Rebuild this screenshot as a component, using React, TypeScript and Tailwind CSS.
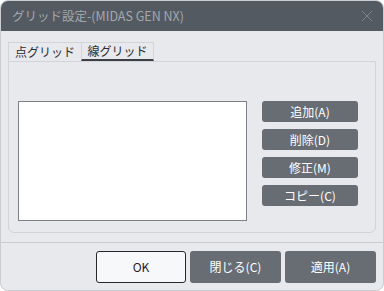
import React from "react";

const sideButtons = ["追加(A)", "削除(D)", "修正(M)", "コピー(C)"];

const App: React.FC = () => {
  return (
    <div
      className="w-[384px] h-[291px] bg-white"
      style={{ fontFamily: '"Noto Sans CJK JP", "Noto Sans", sans-serif' }}
    >
      <div className="w-full h-full rounded-[8px] overflow-hidden bg-[#e8e9ed] border border-[#c9ccd1] flex flex-col">
        {/* Title bar */}
        <div className="h-[30px] shrink-0 bg-[#545a62] flex items-center justify-between pl-[11px] pr-[10px]">
          <span className="text-[12.5px] text-[#a3a7ad]">グリッド設定-(MIDAS GEN NX)</span>
          <svg width="12" height="12" viewBox="0 0 12 12" className="text-[#80848b]">
            <path d="M1 1 L11 11 M11 1 L1 11" stroke="currentColor" strokeWidth="1" />
          </svg>
        </div>

        {/* Tabs */}
        <div className="flex pl-[7px] mt-[11px] h-[19px]">
          <div className="w-[73px] border-t border-l border-[#d2d4d8] flex items-center justify-center text-[12px] text-[#2b2d31] leading-none">
            点グリッド
          </div>
          <div className="w-[73px] border-t border-l border-r border-[#d2d4d8] border-b-2 border-b-[#3d4046] flex items-center justify-center text-[12px] text-[#2b2d31] leading-none">
            線グリッド
          </div>
        </div>

        {/* Panel */}
        <div className="mx-[7px] h-[172px] border border-[#d2d4d8] rounded-b-[6px] flex pl-[9px] pr-[17px] pt-[39px]">
          <div className="w-[229px] h-[120px] bg-white border border-[#7c8087]" />
          <div className="ml-auto flex flex-col gap-[7px]">
            {sideButtons.map((b) => (
              <button
                key={b}
                className="w-[96px] h-[21px] rounded-[3px] bg-[#686d74] text-white text-[12px] leading-none flex items-center justify-center"
              >
                {b}
              </button>
            ))}
          </div>
        </div>

        {/* Separator */}
        <div className="mt-[9px] h-px bg-[#c8cace]" />

        {/* Footer */}
        <div className="flex justify-end gap-[4px] pr-[7px] pt-[8px]">
          <button className="w-[90px] h-[32px] rounded-[3px] bg-[#f7f8fa] border border-[#26282c] text-[12px] text-[#1f2125]">
            OK
          </button>
          <button className="w-[91px] h-[32px] rounded-[3px] bg-[#686d74] text-white text-[12px]">
            閉じる(C)
          </button>
          <button className="w-[91px] h-[32px] rounded-[3px] bg-[#686d74] text-white text-[12px]">
            適用(A)
          </button>
        </div>
      </div>
    </div>
  );
};

export default App;
